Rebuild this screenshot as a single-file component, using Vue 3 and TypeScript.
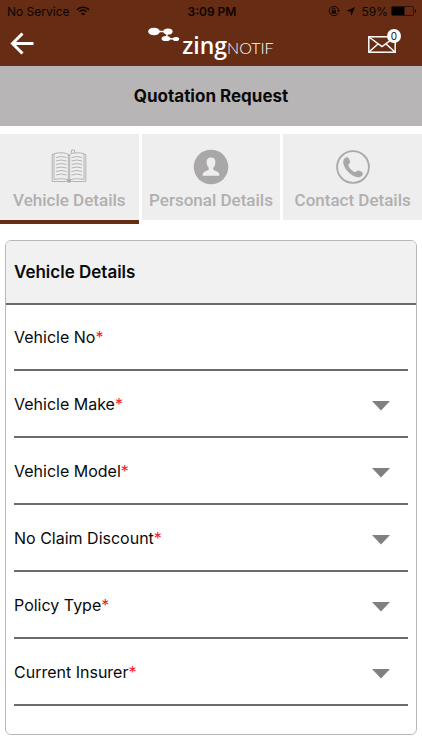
<script setup lang="ts">
import { reactive, ref } from 'vue'

interface Field {
  id: string
  label: string
  kind: 'text' | 'select'
}

type TabId = 'vehicle' | 'personal' | 'contact'

const tabs: { id: TabId; label: string }[] = [
  { id: 'vehicle', label: 'Vehicle Details' },
  { id: 'personal', label: 'Personal Details' },
  { id: 'contact', label: 'Contact Details' },
]

const fields: Field[] = [
  { id: 'vehicle-no', label: 'Vehicle No', kind: 'text' },
  { id: 'vehicle-make', label: 'Vehicle Make', kind: 'select' },
  { id: 'vehicle-model', label: 'Vehicle Model', kind: 'select' },
  { id: 'no-claim-discount', label: 'No Claim Discount', kind: 'select' },
  { id: 'policy-type', label: 'Policy Type', kind: 'select' },
  { id: 'current-insurer', label: 'Current Insurer', kind: 'select' },
]

const activeTab = ref<TabId>('vehicle')
const unread = ref(0)
const values = reactive<Record<string, string>>(
  Object.fromEntries(fields.map((f) => [f.id, ''])),
)
</script>

<template>
  <div class="screen">
    <header class="top">
      <div class="status">
        <div class="status-side">
          <span>No Service</span>
          <svg class="wifi" viewBox="0 0 14 10" width="14" height="10">
            <path d="M1 3.6C4.400 .4 9.600 .4 13 3.600" fill="none" stroke="#0d0502" stroke-width="1.600" />
            <path d="M3.300 5.800C5.500 3.800 8.500 3.800 10.700 5.800" fill="none" stroke="#0d0502" stroke-width="1.500" />
            <path d="M5 7.500C6.200 6.500 7.800 6.500 9 7.500L7 9.600Z" fill="#0d0502" />
          </svg>
        </div>
        <span class="clock">3:09 PM</span>
        <div class="status-side end">
          <svg viewBox="0 0 12 12" width="12" height="12">
            <path d="M10.300 7.800A4.700 4.700 0 1 1 10.500 4.800" fill="none" stroke="#0d0502" stroke-width=".9" />
            <path d="M8.900 4.900H12L10.500 6.900Z" fill="#0d0502" />
            <rect x="3.700" y="5.400" width="4.200" height="3.200" fill="#0d0502" />
            <path d="M4.500 5.500V4.300a1.300 1.300 0 0 1 2.600 0V5.500" fill="none" stroke="#0d0502" stroke-width=".9" />
          </svg>
          <svg class="arrow" viewBox="0 0 9 9" width="9" height="9">
            <path d="M8.900 .1L5.400 8.900L4.700 4.500L.1 4Z" fill="#0d0502" />
          </svg>
          <span>59%</span>
          <svg viewBox="0 0 26 10" width="26" height="10">
            <rect x=".5" y=".5" width="22" height="9" rx="1" fill="none" stroke="#1d0c05" stroke-width=".8" />
            <rect x="1" y="1" width="12.500" height="8" fill="#000" />
            <path d="M24 3v4c1.300-.5 1.300-3.500 0-4Z" fill="#0d0502" />
          </svg>
        </div>
      </div>
      <div class="nav">
        <button class="icon-btn" type="button" aria-label="Back">
          <svg viewBox="0 0 24 24" width="24" height="24">
            <path d="M12.500 1.500L2.500 11.500L12.500 21.500M2.500 11.500H23.500" fill="none" stroke="#fff" stroke-width="3" />
          </svg>
        </button>
        <div class="logo">
          <svg class="mark" viewBox="0 0 32 16" width="32" height="16">
            <g fill="#fff">
              <ellipse cx="6" cy="4.500" rx="5.800" ry="3.800" />
              <ellipse cx="20" cy="4.500" rx="4.600" ry="3.100" />
              <ellipse cx="18" cy="11.500" rx="4.400" ry="2.600" />
              <ellipse cx="28" cy="12" rx="3.200" ry="2" />
            </g>
            <path d="M8 4.500H20L18 11.500L28 12" fill="none" stroke="#fff" stroke-width="1.400" />
          </svg>
          <span class="zing">zing</span><span class="notif">NOTIF</span>
        </div>
        <button class="icon-btn mail" type="button" aria-label="Messages">
          <svg viewBox="0 0 28 17" width="28" height="17">
            <g fill="none" stroke="#fff" stroke-width="1.500">
              <rect x=".8" y=".8" width="26.400" height="15.400" />
              <path d="M1 1L14 10.500L27 1M1 16L10.200 7.800M27 16L17.800 7.800" />
            </g>
          </svg>
          <span class="badge">{{ unread }}</span>
        </button>
      </div>
    </header>

    <h1 class="title">Quotation Request</h1>

    <nav class="tabs">
      <button
        v-for="tab in tabs"
        :key="tab.id"
        type="button"
        class="tab"
        :class="{ active: tab.id === activeTab }"
        @click="activeTab = tab.id"
      >
        <svg v-if="tab.id === 'vehicle'" viewBox="0 0 36 36" width="36" height="36">
          <g fill="none" stroke="#aeacac" stroke-width=".9">
            <path d="M3 5.500H1.200V32.500H15.500Q18 34 20.500 32.500H34.800V5.500H33" />
            <path d="M18 6Q14 2.500 3 4.500V30.500Q13 28.500 18 31.500Q23 28.500 33 30.500V4.500Q22 2.500 18 6Z" />
            <path d="M17.300 6V31M18.700 6V31" />
            <path d="M20.500 4V1H23.500V4" />
            <path d="M5 8.500Q10 6.500 15.500 8.500M5 12Q10 10 15.500 12M5 15.500Q10 13.500 15.500 15.500M5 19Q10 17 15.500 19M5 22.500Q10 20.500 15.500 22.500M5 26Q10 24 15.500 26" />
            <path d="M20.500 8.500Q26 6.500 31 8.500M20.500 12Q26 10 31 12M20.500 15.500Q26 13.500 31 15.500M20.500 19Q26 17 31 19M20.500 22.500Q26 20.500 31 22.500M20.500 26Q26 24 31 26" />
          </g>
          <rect x="16" y="30.500" width="4" height="2.500" fill="#aeacac" />
        </svg>
        <svg v-else-if="tab.id === 'personal'" viewBox="0 0 36 36" width="36" height="36">
          <circle cx="18" cy="18" r="17.300" fill="#a9a7a7" />
          <path
            d="M18 8.500c-3 0-4.400 2-4.400 4.800 0 2.500.9 4.300 2.200 5.500v1.700c-1 1.200-4.200 1.600-5.400 3.200-.6.800-.8 1.800-.8 3H26.400c0-1.200-.2-2.200-.8-3-1.200-1.600-4.400-2-5.400-3.200v-1.700c1.300-1.200 2.200-3 2.200-5.500 0-2.800-1.400-4.800-4.400-4.800Z"
            fill="#efeeee"
          />
        </svg>
        <svg v-else viewBox="0 0 36 36" width="36" height="36">
          <circle cx="18" cy="18" r="15.900" fill="none" stroke="#aaa8a8" stroke-width="1.800" />
          <path
            d="M10.200 8.800c1.300-.9 3-.6 3.700.8l1 2.300c.5 1.100.1 2-.8 2.900-1 1-.9 1.600-.2 2.900 1.200 2.100 3 3.900 5 5 1.200.7 1.800.5 2.700-.4.900-.9 1.800-1.200 2.900-.6l2.300 1.200c1.300.8 1.400 2.300.4 3.500-1.700 2-4.400 2.200-7.400 1C14.400 25 10.300 20.800 8.700 15.700c-.9-2.900-.6-5.400 1.500-6.900Z"
            fill="#a9a7a7"
          />
        </svg>
        <span class="tab-label">{{ tab.label }}</span>
      </button>
    </nav>

    <form class="card" @submit.prevent>
      <h2 class="card-title">Vehicle Details</h2>
      <div class="fields">
        <div v-for="field in fields" :key="field.id" class="row">
          <label :for="field.id">{{ field.label }}<span class="req">*</span></label>
          <input v-if="field.kind === 'text'" :id="field.id" v-model="values[field.id]" type="text" />
          <template v-else>
            <select :id="field.id" v-model="values[field.id]">
              <option value=""></option>
            </select>
            <svg class="caret" viewBox="0 0 18 10" width="18" height="10">
              <path d="M0 0H18L9 9.500Z" fill="#808080" />
            </svg>
          </template>
        </div>
      </div>
    </form>
  </div>
</template>

<style>
body {
  background: #fff;
}
</style>

<style scoped>
.screen {
  font-family: Inter, "Liberation Sans", sans-serif;
  color: #0a0a0a;
}

.top {
  background: #662c14;
}

.status {
  display: grid;
  grid-template-columns: 1fr auto 1fr;
  align-items: center;
  height: 22px;
  padding: 0 5px 0 7px;
  font-size: 12px;
  color: #0d0502;
}

.status-side {
  display: flex;
  align-items: center;
  gap: 6px;
}

.status-side.end {
  justify-content: flex-end;
  gap: 3px;
}

.arrow {
  margin: 0 3px;
}

.clock {
  font-weight: 600;
}

.nav {
  display: grid;
  grid-template-columns: 1fr auto 1fr;
  align-items: center;
  height: 44px;
  padding: 0 24px 0 10px;
}

.icon-btn {
  display: flex;
  justify-self: start;
  padding: 0;
  border: 0;
  background: none;
}

.mail {
  position: relative;
  justify-self: end;
  margin-right: 2px;
}

.badge {
  position: absolute;
  top: -7px;
  right: -5px;
  width: 14px;
  border-radius: 7px;
  background: #fff;
  color: #111;
  font-family: Inter, "Liberation Sans", sans-serif;
  font-size: 10px;
  line-height: 14px;
  text-align: center;
}

.logo {
  display: flex;
  align-items: baseline;
  padding: 2px 0 0 14px;
  color: #fff;
}

.mark {
  align-self: flex-start;
  margin-right: 2px;
}

.zing {
  font-family: "Open Sans", sans-serif;
  font-size: 23px;
  font-weight: 600;
  line-height: 36px;
}

.notif {
  font-family: Lato, sans-serif;
  font-size: 16px;
  font-weight: 300;
}

.title {
  margin: 0;
  background: #b8b5b6;
  font-size: 17px;
  font-weight: 700;
  line-height: 60px;
  text-align: center;
}

.tabs {
  display: grid;
  grid-template-columns: repeat(3, 1fr);
  align-items: start;
  gap: 3px;
  margin-top: 8px;
}

.tab {
  display: flex;
  flex-direction: column;
  align-items: center;
  gap: 5px;
  padding: 15px 0 9px;
  border: 0;
  border-bottom: 4px solid transparent;
  background: #eee;
  background-clip: padding-box;
}

.tab.active {
  border-bottom-color: #662c14;
}

.tab-label {
  color: #b1afaf;
  font-family: Roboto, sans-serif;
  font-size: 17px;
  font-weight: 500;
  line-height: 21px;
  white-space: nowrap;
}

.card {
  margin: 16px 5px;
  padding-bottom: 28px;
  border: 1px solid #b8b8b8;
  border-radius: 6px;
  overflow: hidden;
}

.card-title {
  margin: 0;
  padding: 0 8px;
  border-bottom: 2px solid #6a6a6a;
  background: #f1f1f1;
  font-size: 17px;
  font-weight: 600;
  line-height: 62px;
}

.fields {
  padding: 0 8px;
}

.row {
  display: flex;
  align-items: center;
  height: 65px;
  border-bottom: 2px solid #6c6c6c;
  font-size: 16px;
}

.row:first-child {
  height: 64px;
}

.req {
  color: #f5202a;
}

.row input,
.row select {
  flex: 1;
  min-width: 0;
  height: 40px;
  padding: 0 8px;
  border: 0;
  appearance: none;
  background: none;
  font: inherit;
  outline: none;
}

.caret {
  margin: 4px 18px 0 0;
}
</style>
